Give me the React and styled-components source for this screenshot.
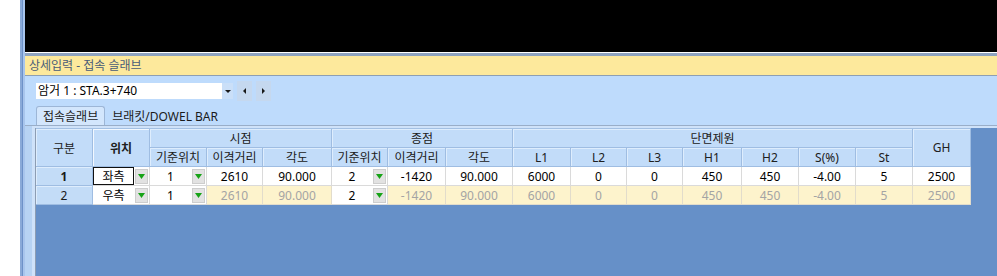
import React from "react";
import styled, { createGlobalStyle } from "styled-components";

const GlobalStyle = createGlobalStyle`
  html, body {
    margin: 0;
    padding: 0;
    background: #ffffff;
  }
  body {
    font-family: "Noto Sans", "Noto Sans CJK KR", sans-serif;
    font-size: 12px;
  }
`;

const widths = [57, 57, 57, 56, 69, 56, 58, 67, 58, 56, 56, 59, 57, 57, 57, 58];

const subHeaders = [
  "기준위치", "이격거리", "각도",
  "기준위치", "이격거리", "각도",
  "L1", "L2", "L3", "H1", "H2", "S(%)", "St",
];

const rows = [
  {
    no: "1",
    side: "좌측",
    startBase: "1",
    startValues: ["2610", "90.000"],
    endBase: "2",
    endValues: ["-1420", "90.000"],
    section: ["6000", "0", "0", "450", "450", "-4.00", "5", "2500"],
    selected: true,
  },
  {
    no: "2",
    side: "우측",
    startBase: "1",
    startValues: ["2610", "90.000"],
    endBase: "2",
    endValues: ["-1420", "90.000"],
    section: ["6000", "0", "0", "450", "450", "-4.00", "5", "2500"],
    selected: false,
  },
];

const GreenArrow = () => (
  <svg width="7" height="5" viewBox="0 0 7 5">
    <polygon points="0,0 7,0 3.5,5" fill="#17a317" />
  </svg>
);

const DarkArrow = ({ dir }) => {
  const pts = {
    down: "0,0 6,0 3,3",
    left: "3,0 3,6 0,3",
    right: "0,0 0,6 3,3",
  }[dir];
  const box = dir === "down" ? [6, 3] : [3, 6];
  return (
    <svg width={box[0]} height={box[1]} viewBox={`0 0 ${box[0]} ${box[1]}`}>
      <polygon points={pts} fill="#1a1a1a" />
    </svg>
  );
};

const ComboCell = ({ value, focus }) => (
  <EditCell>
    <EditValue $focus={focus}>{value}</EditValue>
    <DropBtn>
      <GreenArrow />
    </DropBtn>
  </EditCell>
);

const App = () => {
  return (
    <>
      <GlobalStyle />
      <Screen>
        <SideStrip />
        <Window>
          <Viewport />
          <TitleBar>상세입력 - 접속 슬래브</TitleBar>
          <Body>
            <Toolbar>
              <Combo>
                <ComboText>암거 1 : STA.3+740</ComboText>
                <ComboArrow>
                  <DarkArrow dir="down" />
                </ComboArrow>
              </Combo>
              <NavButton>
                <DarkArrow dir="left" />
              </NavButton>
              <NavButton>
                <DarkArrow dir="right" />
              </NavButton>
            </Toolbar>
            <Tabs>
              <Tab $active>접속슬래브</Tab>
              <Tab>브래킷/DOWEL BAR</Tab>
            </Tabs>
            <TabPanel>
              <GridArea>
                <Grid $cols={widths}>
                  <HeadCell $col={1} $row={1} $rowSpan={2}>구분</HeadCell>
                  <HeadCell $col={2} $row={1} $rowSpan={2} $bold $current>
                    위치
                  </HeadCell>
                  <HeadCell $col={3} $row={1} $colSpan={3}>시점</HeadCell>
                  <HeadCell $col={6} $row={1} $colSpan={3}>종점</HeadCell>
                  <HeadCell $col={9} $row={1} $colSpan={7}>단면제원</HeadCell>
                  <HeadCell $col={16} $row={1} $rowSpan={2}>GH</HeadCell>
                  {subHeaders.map((h, i) => (
                    <HeadCell key={i} $col={i + 3} $row={2}>
                      {h}
                    </HeadCell>
                  ))}

                  {rows.map((r) => {
                    const muted = !r.selected;
                    return (
                      <React.Fragment key={r.no}>
                        <RowHead $bold={r.selected}>{r.no}</RowHead>
                        <ComboCell value={r.side} focus={r.selected} />
                        <ComboCell value={r.startBase} />
                        {r.startValues.map((v, i) => (
                          <Cell key={"s" + i} $muted={muted}>{v}</Cell>
                        ))}
                        <ComboCell value={r.endBase} />
                        {r.endValues.map((v, i) => (
                          <Cell key={"e" + i} $muted={muted}>{v}</Cell>
                        ))}
                        {r.section.map((v, i) => (
                          <Cell key={"d" + i} $muted={muted}>{v}</Cell>
                        ))}
                      </React.Fragment>
                    );
                  })}
                </Grid>
              </GridArea>
            </TabPanel>
          </Body>
        </Window>
      </Screen>
    </>
  );
};

export default App;

const Screen = styled.div`
  display: flex;
  height: 100vh;
  padding-left: 20px;
  box-sizing: border-box;
  overflow: hidden;
`;

const SideStrip = styled.div`
  width: 5px;
  flex-shrink: 0;
  background: linear-gradient(
    to right,
    #8aaad8 0 2px,
    #6e92c8 2px 3px,
    #a8c5ec 3px 5px
  );
`;

const Window = styled.div`
  flex: 1;
  display: flex;
  flex-direction: column;
  min-width: 0;
`;

const Viewport = styled.div`
  height: 52px;
  background: #000000;
  border-bottom: 1px solid #ffffff;
`;

const TitleBar = styled.div`
  height: 19px;
  display: flex;
  align-items: center;
  padding-left: 4px;
  background: #fde99c;
  border-top: 3px solid #8ea3c0;
  border-bottom: 1px solid #8e9fb2;
  color: #4a5c78;
  font-size: 12px;
  line-height: 19px;
`;

const Body = styled.div`
  flex: 1;
  display: flex;
  flex-direction: column;
  padding-left: 10px;
  background: #bedbfc;
`;

const Toolbar = styled.div`
  height: 20px;
  margin-top: 5px;
  padding-left: 1px;
  display: flex;
  align-items: center;
`;

const Combo = styled.div`
  width: 197px;
  height: 16px;
  display: flex;
  background: #ffffff;
`;

const ComboText = styled.div`
  flex: 1;
  padding-left: 2px;
  color: #000000;
  font-size: 12px;
  line-height: 16px;
  white-space: nowrap;
`;

const ComboArrow = styled.div`
  width: 11px;
  display: flex;
  align-items: center;
  justify-content: center;
  background: #cadff8;
`;

const NavButton = styled.div`
  width: 15px;
  height: 20px;
  margin-left: 4px;
  display: flex;
  align-items: center;
  justify-content: center;
  background: #c5d8ef;
`;

const Tabs = styled.div`
  height: 21px;
  margin-top: 3px;
  padding-left: 1px;
  display: flex;
  align-items: flex-end;
`;

const Tab = styled.div`
  height: 19px;
  box-sizing: border-box;
  padding: 0 ${(p) => (p.$active ? "6px" : "4px")};
  margin-right: 2px;
  display: flex;
  align-items: center;
  font-size: 12px;
  color: #1a1a1a;
  background: ${(p) => (p.$active ? "#d3e6fc" : "transparent")};
  border: 1px solid ${(p) => (p.$active ? "#9db6d6" : "transparent")};
  border-bottom: none;
  border-radius: 3px 3px 0 0;
`;

const TabPanel = styled.div`
  flex: 1;
  display: flex;
  flex-direction: column;
  border-top: 1px solid #9aaec8;
  padding-top: 2px;
  margin-left: -10px;
  padding-left: 10px;
  background: linear-gradient(to right, #b7d3f3 0 7px, #cfe2f9 7px 10px);
`;

const GridArea = styled.div`
  flex: 1;
  background: #6690c8;
  border-left: 1px solid #8d9db3;
`;

const Grid = styled.div`
  display: grid;
  grid-template-columns: ${(p) => p.$cols.map((w) => `${w}px`).join(" ")};
  grid-template-rows: repeat(4, 19px);
  width: fit-content;
  border-top: 1px solid #a3c0e3;
`;

const HeadCell = styled.div`
  grid-column: ${(p) => `${p.$col} / span ${p.$colSpan || 1}`};
  grid-row: ${(p) => `${p.$row} / span ${p.$rowSpan || 1}`};
  display: flex;
  align-items: center;
  justify-content: center;
  box-sizing: border-box;
  background: #c2dcf9;
  border-right: 1px solid #9fbde2;
  border-bottom: 1px solid #9fbde2;
  box-shadow: inset 1px 1px 0 ${(p) => (p.$current ? "#f2f8ff" : "#deedfd")};
  color: #202020;
  font-size: 12px;
  font-weight: ${(p) => (p.$bold ? 700 : 400)};
  white-space: nowrap;
`;

const RowHead = styled.div`
  display: flex;
  align-items: center;
  justify-content: center;
  box-sizing: border-box;
  background: #c3dcf7;
  border-right: 1px solid #9fbde2;
  border-bottom: 1px solid #9fbde2;
  box-shadow: inset 1px 1px 0 #deedfd;
  color: #1a1a1a;
  font-size: 12px;
  font-weight: ${(p) => (p.$bold ? 700 : 400)};
`;

const Cell = styled.div`
  display: flex;
  align-items: center;
  justify-content: center;
  box-sizing: border-box;
  background: ${(p) => (p.$muted ? "#fdf3cc" : "#ffffff")};
  border-right: 1px solid ${(p) => (p.$muted ? "#e2dccb" : "#dadada")};
  border-bottom: 1px solid ${(p) => (p.$muted ? "#e2dccb" : "#dadada")};
  color: ${(p) => (p.$muted ? "#a4a4a4" : "#000000")};
  font-size: 12px;
`;

const EditCell = styled.div`
  display: flex;
  align-items: center;
  box-sizing: border-box;
  background: #ffffff;
  border-right: 1px solid #dadada;
  border-bottom: 1px solid #dadada;
`;

const EditValue = styled.div`
  flex: 1;
  height: 100%;
  display: flex;
  align-items: center;
  justify-content: center;
  box-sizing: border-box;
  border: 1px solid ${(p) => (p.$focus ? "#111111" : "transparent")};
  color: #000000;
  font-size: 12px;
`;

const DropBtn = styled.div`
  width: 13px;
  height: 15px;
  margin: 0 1px;
  display: flex;
  align-items: center;
  justify-content: center;
  box-sizing: border-box;
  background: #e2e2e2;
  border: 1px solid #cdcdcd;
`;
